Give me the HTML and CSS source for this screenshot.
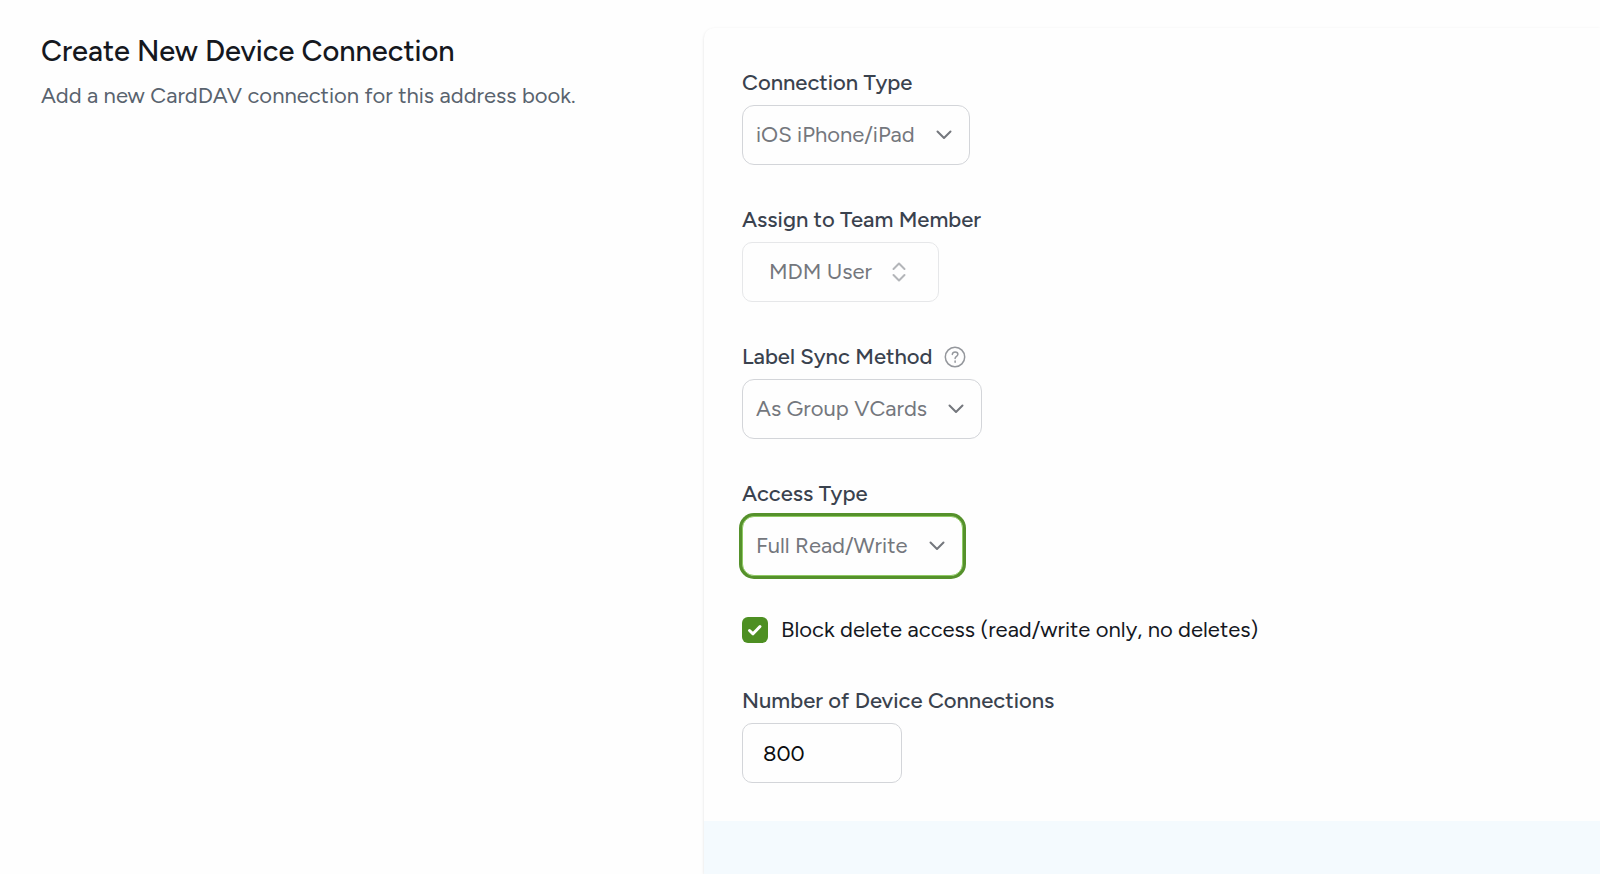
FILE: index.html
```html
<!DOCTYPE html>
<html lang="en">
<head>
<meta charset="utf-8">
<meta name="viewport" content="width=device-width, initial-scale=1">
<title>Create New Device Connection</title>
<link rel="stylesheet" href="styles.css">
</head>
<body>
<main class="section">
  <header class="intro">
    <h1 class="intro-title">Create New Device Connection</h1>
    <p class="intro-text">Add a new CardDAV connection for this address book.</p>
  </header>
  <form class="card">
    <div class="card-body">
      <div class="field">
        <label class="label" for="type">Connection Type</label>
        <div class="select-wrap">
          <select class="control select select-type" id="type"><option>iOS iPhone/iPad</option></select>
          <svg class="chevron" viewBox="0 0 16 10" aria-hidden="true"><path d="M1.500 1.500 8 8l6.500-6.500"/></svg>
        </div>
      </div>
      <div class="field">
        <label class="label" for="member">Assign to Team Member</label>
        <button class="control member" id="member" type="button">MDM User
          <svg class="updown" viewBox="0 0 14 20" aria-hidden="true"><path d="M1.500 7 7 1.500 12.500 7M1.500 13 7 18.500 12.500 13"/></svg>
        </button>
      </div>
      <div class="field">
        <div class="label-row">
          <label class="label" for="sync">Label Sync Method</label>
          <svg class="help" viewBox="0 0 22 22" role="img" aria-label="Help"><circle cx="11" cy="11" r="9.700"/><path d="M8.300 8.400c.2-1.500 1.300-2.400 2.800-2.400 1.600 0 2.800.9 2.800 2.300 0 2.100-2.800 2-2.800 4.300M11.100 15v1.300"/></svg>
        </div>
        <div class="select-wrap">
          <select class="control select select-sync" id="sync"><option>As Group VCards</option></select>
          <svg class="chevron" viewBox="0 0 16 10" aria-hidden="true"><path d="M1.500 1.500 8 8l6.500-6.500"/></svg>
        </div>
      </div>
      <div class="field">
        <label class="label" for="access">Access Type</label>
        <div class="select-wrap">
          <select class="control select select-access" id="access"><option>Full Read/Write</option></select>
          <svg class="chevron" viewBox="0 0 16 10" aria-hidden="true"><path d="M1.500 1.500 8 8l6.500-6.500"/></svg>
        </div>
      </div>
      <div class="check-row">
        <span class="check-wrap">
          <input class="check" id="block" type="checkbox" checked>
          <svg class="tick" viewBox="0 0 16 14" aria-hidden="true"><path d="m2.500 7.500 3.500 3.300L13 3.500"/></svg>
        </span>
        <label class="check-label" for="block">Block delete access (read/write only, no deletes)</label>
      </div>
      <div class="field">
        <label class="label" for="count">Number of Device Connections</label>
        <input class="control count" id="count" type="text" inputmode="numeric" value="800">
      </div>
    </div>
    <div class="card-footer"></div>
  </form>
</main>
</body>
</html>
```
FILE: styles.css
```css
* { box-sizing: border-box; }
body {
  margin: 0;
  background: #fefefe;
  color: #15181e;
  font-family: Figtree, Lato, sans-serif;
  font-size: 22px;
  line-height: 28px;
  overflow-x: hidden;
}
.section {
  display: grid;
  grid-template-columns: minmax(0, 44fr) minmax(0, 56fr);
  min-height: 100vh;
  padding-top: 28px;
}
.intro { padding: 4px 40px 0 41px; }
.intro-title {
  margin: 0;
  font-size: 29px;
  font-weight: 500;
  line-height: 38px;
}
.intro-text { margin: 12px 0 0; color: #59636e; }
.card {
  display: flex;
  flex-direction: column;
  border-top-left-radius: 10px;
  box-shadow: 0 1px 3px rgba(0, 0, 0, 0.12);
  background: #fefefe;
}
.card-body {
  display: flex;
  flex-direction: column;
  gap: 40px;
  padding: 40px 38px 38px;
}
.card-footer { flex: 1; background: #f4fafe; }
.field {
  display: flex;
  flex-direction: column;
  align-items: flex-start;
  gap: 8px;
}
.label { color: #3a424e; font-weight: 500; line-height: 29px; }
.label-row { display: flex; align-items: center; gap: 12px; }
.control {
  height: 60px;
  border: 1px solid #d3d5d9;
  border-radius: 12px;
  background: #fefefe;
  font: inherit;
}
.select-wrap { display: grid; align-items: center; }
.select-wrap > * { grid-area: 1 / 1; }
.select { appearance: none; padding: 0 13px; color: #74777d; outline: none; }
.select-type { width: 228px; }
.select-sync { width: 240px; }
.select-access {
  width: 221px;
  border-color: #8fca63;
  box-shadow: 0 0 0 3px #55912b;
}
.chevron {
  width: 16px;
  height: 10px;
  margin-right: 18px;
  justify-self: end;
  pointer-events: none;
}
.chevron path, .updown path, .help path, .help circle, .tick path {
  fill: none;
  stroke: #74777d;
  stroke-width: 2;
  stroke-linecap: round;
  stroke-linejoin: round;
}
.member {
  display: flex;
  align-items: center;
  justify-content: space-between;
  width: 197px;
  padding: 0 32px 0 26px;
  border-color: #e6e7e9;
  border-radius: 10px;
  color: #74777d;
}
.updown { width: 14px; height: 20px; }
.updown path { stroke: #b3b5b9; }
.help { width: 22px; height: 22px; }
.help path, .help circle { stroke: #94979c; stroke-width: 1.500; }
.check-row { display: flex; align-items: center; gap: 13px; padding-bottom: 2px; }
.check-wrap { display: grid; place-items: center; }
.check-wrap > * { grid-area: 1 / 1; }
.check {
  width: 26px;
  height: 26px;
  margin: 0;
  appearance: none;
  border-radius: 6px;
  background: #4d8f22;
}
.tick { width: 16px; height: 14px; pointer-events: none; }
.tick path { stroke: #fff; stroke-width: 3; }
.count { width: 160px; padding: 0 20px; border-radius: 10px; color: #0b0c0e; }
```
